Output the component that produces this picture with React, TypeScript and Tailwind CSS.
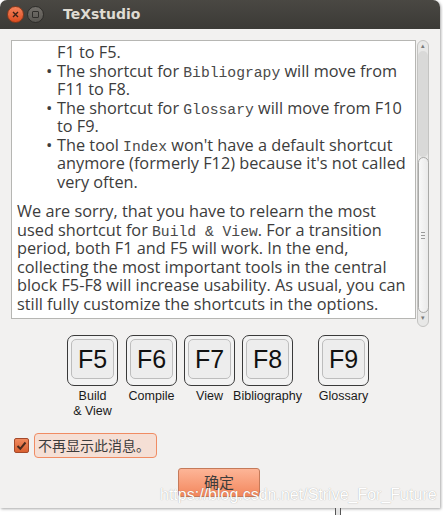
import React from 'react';

const Mono: React.FC<{ children: React.ReactNode }> = ({ children }) => (
    <span className="font-['Liberation_Mono',monospace] text-[14.7px] leading-none text-[#4a4a4a]">{children}</span>
);

const keys = [
    { key: 'F5', label: ['Build', '& View'], gap: 'ml-0' },
    { key: 'F6', label: ['Compile'], gap: 'ml-[8px]' },
    { key: 'F7', label: ['View'], gap: 'ml-[7px]' },
    { key: 'F8', label: ['Bibliography'], gap: 'ml-[7px]' },
    { key: 'F9', label: ['Glossary'], gap: 'ml-[25px]' },
];

const KeyCap: React.FC<{ k: string; label: string[]; gap: string }> = ({ k, label, gap }) => (
    <div className={`${gap} w-[51px] flex flex-col items-center`}>
        <div className="w-[51px] h-[51px] rounded-[7px] border-[1.5px] border-[#3a3a3a] bg-[#f3f3f3] p-[3px]">
            <div className="w-full h-[40px] rounded-[5px] border border-[#bdbdbd] bg-[#ededed] flex items-center justify-center">
                <span className="font-['Liberation_Sans',sans-serif] text-[25px] leading-none text-[#111]">{k}</span>
            </div>
        </div>
        <div className="mt-[3px] whitespace-nowrap text-center font-['Liberation_Sans',sans-serif] text-[12.5px] leading-[15px] text-[#1a1a1a]">
            {label.map(l => <div key={l}>{l}</div>)}
        </div>
    </div>
);

const Line: React.FC<{ children: React.ReactNode }> = ({ children }) => (
    <div className="h-[18.5px] leading-[18.5px]">{children}</div>
);

const App: React.FC = () => {
    const bullets: React.ReactNode[][] = [
        [<>F1 to F5.</>],
        [<>The shortcut for <Mono>Bibliograpy</Mono> will move from</>, <>F11 to F8.</>],
        [<>The shortcut for <Mono>Glossary</Mono> will move from F10</>, <>to F9.</>],
        [<>The tool <Mono>Index</Mono> won't have a default shortcut</>, <>anymore (formerly F12) because it's not called</>, <>very often.</>],
    ];

    return (
        <div className="w-[443px] h-[515px] bg-white relative overflow-hidden">
            {/* window */}
            <div className="w-[440px] h-[508px] bg-[#f2f1f0] rounded-t-[7px] shadow-[1px_1px_3px_rgba(0,0,0,0.35)] flex flex-col overflow-hidden">
                {/* title bar */}
                <div className="h-[29px] bg-gradient-to-b from-[#4a4843] to-[#3b3a36] flex items-center pl-[7px]">
                    <div className="w-[17px] h-[17px] rounded-full bg-gradient-to-b from-[#f4825a] to-[#dc4c1e] border border-[#8c3a1c] flex items-center justify-center">
                        <svg width="7" height="7" viewBox="0 0 7 7">
                            <path d="M1 1L6 6M6 1L1 6" stroke="#3a2218" strokeWidth="1.4" />
                        </svg>
                    </div>
                    <div className="ml-[3px] w-[17px] h-[17px] rounded-full bg-gradient-to-b from-[#73706b] to-[#595752] border border-[#2e2d2a] flex items-center justify-center">
                        <div className="w-[7px] h-[7px] border-[1.3px] border-[#2f2e2b] rounded-[1px]" />
                    </div>
                    <span className="ml-[19px] font-['DejaVu_Sans',sans-serif] font-bold text-[14px] text-[#dfdbd2]">TeXstudio</span>
                </div>

                {/* text area with scrollbar */}
                <div className="mt-[11px] ml-[11px] flex">
                    <div className="w-[405px] h-[279px] bg-white border border-[#b6b6b3] overflow-hidden font-['Open_Sans',sans-serif] text-[16.3px] text-[#3c3c3c] whitespace-nowrap">
                        <div className="pt-[2px] pl-[45px]">
                            {bullets.map((lines, i) => (
                                <div key={i} className="relative">
                                    {i > 0 && <span className="absolute -left-[11px] top-0 text-[17px] leading-[18.5px]">•</span>}
                                    {lines.map((l, j) => <Line key={j}>{l}</Line>)}
                                </div>
                            ))}
                        </div>
                        <div className="mt-[11px] pl-[5px]">
                            <Line>We are sorry, that you have to relearn the most</Line>
                            <Line>used shortcut for <Mono>Build &amp; View</Mono>. For a transition</Line>
                            <Line>period, both F1 and F5 will work. In the end,</Line>
                            <Line>collecting the most important tools in the central</Line>
                            <Line>block F5-F8 will increase usability. As usual, you can</Line>
                            <Line>still fully customize the shortcuts in the options.</Line>
                        </div>
                    </div>
                    {/* scrollbar */}
                    <div className="ml-[1px] w-[12px] h-[287px] rounded-[6px] border border-[#c4c4c2] bg-[#e8e8e7] flex flex-col items-center">
                        <span className="text-[7px] leading-[10px] text-[#7a7a7a]">▴</span>
                        <div className="w-[10px] h-[106px] rounded-[5px] bg-[#d9d9d8]" />
                        <div className="w-[11px] h-[156px] rounded-[6px] border border-[#a9a9a7] bg-gradient-to-r from-[#f8f8f8] to-[#eaeaea] flex items-center justify-center">
                            <div className="flex flex-col gap-[2px]">
                                <div className="w-[4px] h-px bg-[#9a9a9a]" />
                                <div className="w-[4px] h-px bg-[#9a9a9a]" />
                                <div className="w-[4px] h-px bg-[#9a9a9a]" />
                            </div>
                        </div>
                        <span className="text-[7px] leading-[10px] text-[#7a7a7a]">▾</span>
                    </div>
                </div>

                {/* keys */}
                <div className="mt-[8px] ml-[67px] flex">
                    {keys.map(k => <KeyCap key={k.key} k={k.key} label={k.label} gap={k.gap} />)}
                </div>

                {/* checkbox */}
                <div className="mt-[14px] ml-[14px] flex items-center">
                    <div className="w-[15px] h-[15px] rounded-[2px] bg-gradient-to-b from-[#f08a5f] to-[#d9602f] border border-[#a4492a] flex items-center justify-center">
                        <svg width="11" height="10" viewBox="0 0 11 10">
                            <path d="M1.5 5L4.3 7.8L9.5 1.5" fill="none" stroke="#4a2a1e" strokeWidth="2" />
                        </svg>
                    </div>
                    <div className="ml-[5px] w-[123px] h-[25px] rounded-[4px] border border-[#f08c63] bg-[#f5dfd5] flex items-center pl-[3px]">
                        <span className="font-['Noto_Sans_CJK_SC',sans-serif] text-[14px] text-[#3c3c3c]">不再显示此消息。</span>
                    </div>
                </div>

                {/* button */}
                <div className="mt-[10px] ml-[178px]">
                    <div className="w-[82px] h-[29px] rounded-[3px] border border-[#c47a5a] bg-gradient-to-b from-[#fdb597] to-[#f2875d] flex items-center justify-center">
                        <span className="font-['Noto_Sans_CJK_SC',sans-serif] text-[15px] text-[#3c3c3c]">确定</span>
                    </div>
                </div>
            </div>

            {/* background window edge */}
            <div className="absolute left-[335px] top-[508px] w-[6px] h-[7px] border-x border-[#555] bg-[#e4e4e4]" />

            {/* watermark */}
            <div className="absolute left-[160px] top-[487px] font-['Liberation_Sans',sans-serif] text-[16px] leading-none text-white [text-shadow:0_0_1px_rgba(0,0,0,0.35)] whitespace-nowrap">
                https://blog.csdn.net/Strive_For_Future
            </div>
        </div>
    );
};

export default App;
